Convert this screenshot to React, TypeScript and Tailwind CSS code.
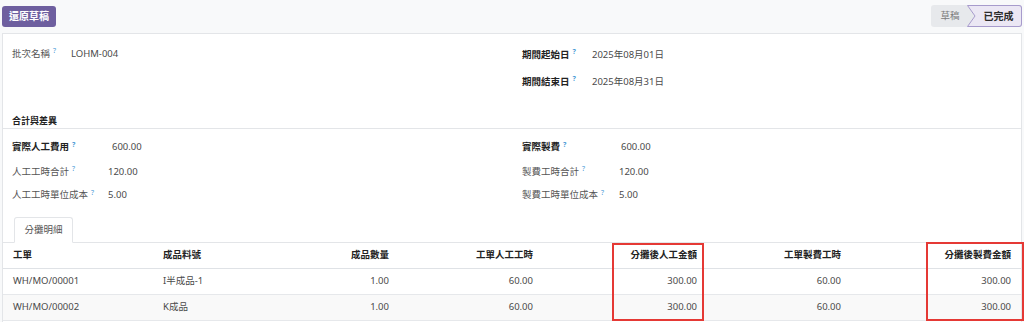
const Help = () => <sup className="ml-[3px] text-[7px] text-[#4a9ad6]">?</sup>;

const Field = ({ label, value, labelW, bold, valueShift, h }: { label: string; value: string; labelW: string; bold?: boolean; valueShift?: string; h?: string }) => (
  <div className={`flex items-center ${h ?? "h-[24px]"}`}>
    <div className={`${labelW} shrink-0 ${bold ? "font-bold text-[#222]" : "text-[#555]"}`}>
      {label}
      <Help />
    </div>
    <div className={`text-[#4a4a4a] ${valueShift ?? ""}`}>{value}</div>
  </div>
);

const cols = "grid grid-cols-[150px_147px_99px_144px_164px_144px_170px]";

const rows = [
  { mo: "WH/MO/00001", item: "I半成品-1", qty: "1.00", lh: "60.00", la: "300.00", oh: "60.00", oa: "300.00" },
  { mo: "WH/MO/00002", item: "K成品", qty: "1.00", lh: "60.00", la: "300.00", oh: "60.00", oa: "300.00" },
];

export default function App() {
  return (
    <div className="w-[1024px] h-[322px] overflow-hidden bg-[#f8f9fa] text-[9.5px] font-['Noto_Sans','Noto_Sans_CJK_TC',sans-serif]">
      {/* control panel */}
      <div className="flex items-center justify-between h-[33px] px-[2px]">
        <button className="h-[21px] px-[7px] rounded-[3px] bg-[#6e5f9f] text-white font-bold text-[10px]">還原草稿</button>
        <div className="flex h-[22px] mb-[1px]">
          <div className="w-[36px] bg-[#e7e9ec] rounded-l-[3px] flex items-center justify-center text-[#7a7a7a] pl-[2px]">草稿</div>
          <svg width="9" height="22" viewBox="0 0 9 22" className="shrink-0">
            <polygon points="0,0 8,11 0,22" fill="#e7e9ec" />
            <polygon points="0,0 9,0 9,22 0,22 8,11" fill="#ebe7f4" />
            <polyline points="9,0.5 0.5,0.5 8,11 0.5,21.5 9,21.5" fill="none" stroke="#a79bcc" strokeWidth="1" />
          </svg>
          <div className="w-[46px] bg-[#ebe7f4] border border-l-0 border-[#a79bcc] rounded-r-[3px] flex items-center justify-center font-semibold text-[#2b2b2b] text-[10px]">已完成</div>
        </div>
      </div>

      {/* sheet */}
      <div className="mx-[2px] bg-white border border-[#e3e5e8] h-[300px]">
        <div className="grid grid-cols-2 pt-[8px]">
          <div className="pl-[9px]">
            <Field label="批次名稱" value="LOHM-004" labelW="w-[59px]" />
          </div>
          <div className="pl-[10px] pt-[1px]">
            <Field label="期間起始日" value="2025年08月01日" labelW="w-[70px]" bold />
            <div className="h-[3px]" />
            <Field label="期間結束日" value="2025年08月31日" labelW="w-[70px]" bold />
          </div>
        </div>

        <div className="mt-[19px] h-[16px] pl-[9px] flex items-center font-bold text-[#222] text-[9px] border-b border-[#e3e5e8]">合計與差異</div>

        <div className="grid grid-cols-2 pt-[6px]">
          <div className="pl-[9px]">
            <Field label="實際人工費用" value="600.00" labelW="w-[96px]" bold valueShift="ml-[4px]" h="h-[25px]" />
            <Field label="人工工時合計" value="120.00" labelW="w-[96px]" />
            <Field label="人工工時單位成本" value="5.00" labelW="w-[96px]" h="h-[23px]" />
          </div>
          <div className="pl-[10px]">
            <Field label="實際製費" value="600.00" labelW="w-[97px]" bold valueShift="ml-[2px]" h="h-[25px]" />
            <Field label="製費工時合計" value="120.00" labelW="w-[97px]" />
            <Field label="製費工時單位成本" value="5.00" labelW="w-[97px]" h="h-[23px]" />
          </div>
        </div>

        {/* tabs */}
        <div className="mt-[10px] pl-[11px] flex border-b border-[#e3e5e8]">
          <div className="-mb-px h-[26px] w-[59px] flex items-center justify-center bg-white border border-b-white border-[#e3e5e8] rounded-t-[3px] text-[#555]">分攤明細</div>
        </div>

        {/* table */}
        <div className="relative">
          <div className={`${cols} h-[26px] items-center border-b border-[#dfe2e6] font-semibold text-[#222]`}>
            <div className="px-[10px]">工單</div>
            <div className="px-[10px]">成品料號</div>
            <div className="px-[10px] text-right">成品數量</div>
            <div className="px-[10px] text-right">工單人工工時</div>
            <div className="px-[10px] text-right">分攤後人工金額</div>
            <div className="px-[10px] text-right">工單製費工時</div>
            <div className="px-[10px] text-right">分攤後製費金額</div>
          </div>
          {rows.map((r, i) => (
            <div key={r.mo} className={`${cols} h-[26px] items-center border-b border-[#e6e8eb] text-[#4a4a4a] ${i === 1 ? "bg-[#f9f9f9]" : ""}`}>
              <div className="px-[10px]">{r.mo}</div>
              <div className="px-[10px]">{r.item}</div>
              <div className="px-[10px] text-right">{r.qty}</div>
              <div className="px-[10px] text-right">{r.lh}</div>
              <div className="px-[10px] text-right">{r.la}</div>
              <div className="px-[10px] text-right">{r.oh}</div>
              <div className="px-[10px] text-right">{r.oa}</div>
            </div>
          ))}
          <div className="absolute left-[609px] top-0 w-[92px] h-[78px] border-2 border-[#e53935]" />
          <div className="absolute left-[923px] -top-px w-[98px] h-[79px] border-2 border-[#e53935]" />
        </div>
      </div>
    </div>
  );
}
